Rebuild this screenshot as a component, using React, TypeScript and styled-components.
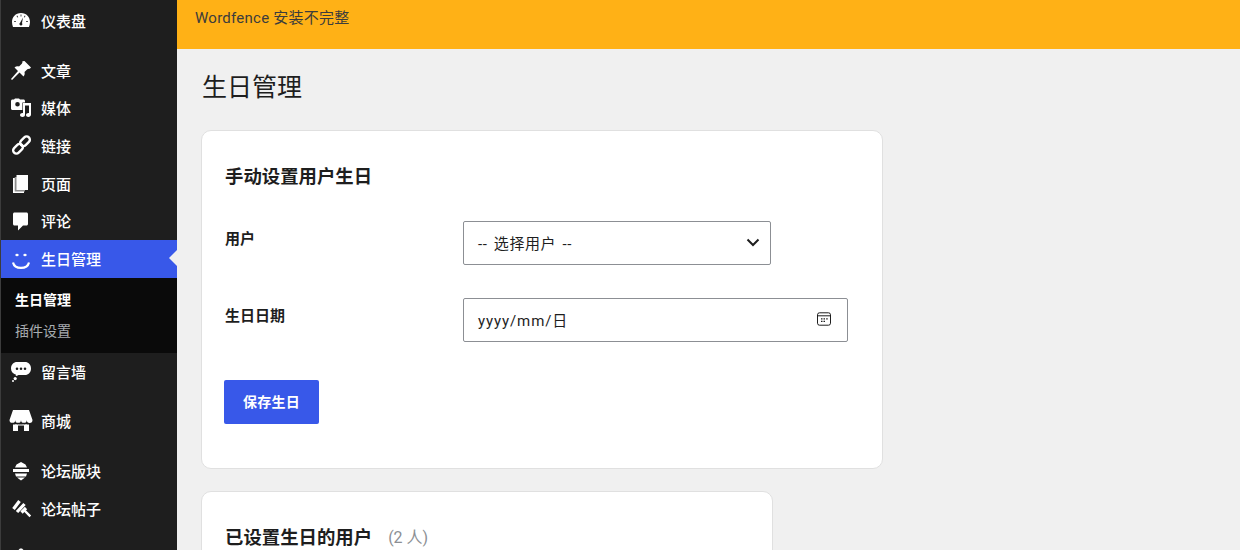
import styled, { createGlobalStyle } from 'styled-components';
import { ReactNode } from 'react';

const GlobalStyle = createGlobalStyle`
  html, body {
    margin: 0;
    height: 550px;
    overflow: hidden;
    background: #f0f0f0;
    font-family: Roboto, "Noto Sans CJK SC", sans-serif;
  }
  * { box-sizing: border-box; }
`;

const Page = styled.div`
  display: flex;
  width: 1240px;
  height: 550px;
  overflow: hidden;
`;

const Sidebar = styled.nav`
  width: 177px;
  flex: none;
  height: 550px;
  overflow: hidden;
  background: #1e1e1e;
  border-left: 1px solid #3c3c3c;
  color: #f0f0f1;
`;

const MenuItem = styled.a<{ $height: number; $active?: boolean; $mb?: number }>`
  position: relative;
  display: flex;
  flex: none;
  align-items: center;
  height: ${({ $height }) => $height}px;
  margin-bottom: ${({ $mb }) => $mb ?? 0}px;
  padding: 0 0 2px 9px;
  gap: 9px;
  font-size: 15px;
  font-weight: 500;
  color: #fff;
  background: ${({ $active }) => ($active ? '#3858e9' : 'transparent')};

  ${({ $active }) =>
    $active &&
    `&::after {
      content: '';
      position: absolute;
      right: 0;
      top: 50%;
      margin-top: -9px;
      border: 8px solid transparent;
      border-right-color: #f0f0f0;
      border-left-width: 0;
    }`}
`;

const IconBox = styled.span`
  display: flex;
  width: 22px;
  height: 22px;
  flex: none;
  svg { display: block; fill: currentColor; overflow: visible; }
`;

const SubMenu = styled.div`
  display: flex;
  flex-direction: column;
  height: 75px;
  padding: 5px 0 0 14px;
  background: #0a0a0a;
`;

const SubItem = styled.a<{ $current?: boolean }>`
  display: flex;
  align-items: center;
  height: 31px;
  font-size: 14px;
  font-weight: ${({ $current }) => ($current ? 700 : 400)};
  color: ${({ $current }) => ($current ? '#fff' : 'rgba(240, 246, 252, 0.7)')};
`;

const Main = styled.main`
  flex: 1;
  min-width: 0;
  display: flex;
  flex-direction: column;
`;

const Notice = styled.div`
  flex: none;
  height: 49px;
  padding: 9px 18px 0;
  background: #ffb116;
  color: #3c3c3c;
  font-size: 15px;
  line-height: 18px;
  letter-spacing: 0.25px;
`;

const Content = styled.div`
  flex: none;
  padding: 22px 0 0 24px;
`;

const Title = styled.h1`
  margin: 0 0 25px 1px;
  font-size: 25px;
  font-weight: 400;
  line-height: 34px;
  color: #1e1e1e;
`;

const Card = styled.section<{ $width: number; $height?: number }>`
  width: ${({ $width }) => $width}px;
  ${({ $height }) => $height && `height: ${$height}px;`}
  margin-bottom: 22px;
  padding: 34px 22px 0;
  background: #fff;
  border: 1px solid #e0e0e0;
  border-radius: 10px;
`;

const CardTitle = styled.h2`
  display: flex;
  align-items: center;
  margin: 0 0 32px 1px;
  font-size: 18.4px;
  font-weight: 700;
  line-height: 24px;
  color: #1e1e1e;
`;

const Count = styled.span`
  margin-left: 16px;
  font-size: 16px;
  font-weight: 400;
  color: #8c8f94;
`;

const FormRow = styled.div`
  display: flex;
  margin-bottom: 33px;
`;

const Label = styled.label`
  width: 239px;
  flex: none;
  padding: 8px 0 0 1px;
  font-size: 15px;
  font-weight: 700;
  line-height: 20px;
  color: #1e1e1e;
`;

const Field = styled.div<{ $width: number; $pr: number; $spacing: number }>`
  display: flex;
  align-items: center;
  justify-content: space-between;
  width: ${({ $width }) => $width}px;
  height: 44px;
  padding: 0 ${({ $pr }) => $pr}px 2px 14px;
  background: #fff;
  border: 1px solid #8c8f94;
  border-radius: 2px;
  font-size: 15px;
  letter-spacing: ${({ $spacing }) => $spacing}px;
  word-spacing: 2px;
  color: #1e1e1e;
`;

const SaveButton = styled.button`
  display: block;
  width: 95px;
  height: 44px;
  margin-top: 38px;
  padding: 0 0 3px;
  border: none;
  border-radius: 2px;
  background: #3858e9;
  color: #fff;
  font-family: inherit;
  font-size: 14px;
  font-weight: 700;
  letter-spacing: 0.3px;
`;

// menu glyphs, all drawn on the 22x22 icon box
const Glyph = ({ children }: { children: ReactNode }) => (
  <svg width="22" height="22" viewBox="0 0 22 22">
    {children}
  </svg>
);

const icons: Record<string, ReactNode> = {
  dashboard: (
    <Glyph>
      <path
        fillRule="evenodd"
        d="M11 4C5.500 4 2 8.300 2 13c0 1.800.4 3.500 1 5h16c.6-1.500 1-3.200 1-5 0-4.700-3.500-9-9-9zM10.600 5.500h.8v2h-.8zM6.500 7l.7-.4 1 1.600-.7.4zM15.500 7l-.7-.4-1 1.600.7.4zM4 12.300h2v.8H4zM16 12.300h2v.8h-2zM13 8.500l-1 5.500a1.500 1.500 0 1 1-1.900-.3z"
      />
    </Glyph>
  ),
  pin: (
    <Glyph>
      <path d="M14.500 2 21 8.500 19.800 9.700c-.8-.2-1.800 0-2.500.6L14.500 13c.5 1.800.1 3.400-1 4.500l-4-4L2 21l-1-1 7-8-3.500-3.500c1.300-1.200 3-1.500 4.500-1l2.800-2.800c.6-.7.8-1.600.6-2.400z" />
    </Glyph>
  ),
  media: (
    <Glyph>
      <path
        fillRule="evenodd"
        d="M4 3.500 5 2.500h4l1 1h3.500c.8 0 1.500.7 1.500 1.500v7.500c0 .8-.7 1.500-1.500 1.500h-11C1.700 14 1 13.300 1 12.500V5c0-.8.7-1.500 1.500-1.500zM7.500 6a2.300 2.300 0 1 0 0 4.600 2.300 2.300 0 0 0 0-4.600z"
      />
      <path
        stroke="#1e1e1e"
        strokeWidth="1.200"
        paintOrder="stroke"
        d="M21 7v11.500c0 1.400-1.100 2.500-2.500 2.500s-2.500-.9-2.500-2 1.100-2 2.500-2l.5.100V9.500h-4v9.200c0 1.300-1.100 2.300-2.500 2.300S10 20.100 10 19s1.100-2 2.500-2l.5.100V7z"
      />
    </Glyph>
  ),
  link: (
    <Glyph>
      <g fill="none" stroke="currentColor" strokeWidth="2.400">
        <rect x="9.500" y="4" width="11" height="6.500" rx="3.200" transform="rotate(-45 15 7.250)" />
        <rect x="2.500" y="11.500" width="11" height="6.500" rx="3.200" transform="rotate(-45 8 14.750)" />
      </g>
    </Glyph>
  ),
  pages: (
    <Glyph>
      <path d="M3 6h11v15H3z" />
      <path fill="#8d8d8d" d="M4.700 5H15v14.500H4.700z" />
      <path d="M6.500 3H18v15H6.500z" />
    </Glyph>
  ),
  comment: (
    <Glyph>
      <path d="M4.500 2.500h12c.8 0 1.500.7 1.500 1.500v10c0 .8-.7 1.500-1.500 1.500H13l-5 5v-5H4.500c-.8 0-1.500-.7-1.500-1.500V4c0-.8.7-1.500 1.500-1.500z" />
    </Glyph>
  ),
  smile: (
    <Glyph>
      <ellipse cx="7" cy="8" rx="1.700" ry="1.300" />
      <ellipse cx="15" cy="8" rx="1.700" ry="1.300" />
      <path fill="none" stroke="currentColor" strokeWidth="2.200" d="M3 15.500c1.800 7.300 14.200 7.300 16 0" />
    </Glyph>
  ),
  bubble: (
    <Glyph>
      <path
        fillRule="evenodd"
        d="M7 2h8c3.300 0 6 2.400 6 6.500S18.300 15 15 15H8.500c-.8.6-2 1-3 1 .3-.4.500-.8.500-1.300C3 14 1 11.500 1 8.500 1 4.400 3.700 2 7 2zM7 7.500a1.300 1.300 0 1 0 0 2.600 1.300 1.300 0 0 0 0-2.600zM11 7.500a1.300 1.300 0 1 0 0 2.600 1.300 1.300 0 0 0 0-2.600zM15 7.500a1.300 1.300 0 1 0 0 2.600 1.300 1.300 0 0 0 0-2.600z"
      />
      <circle cx="5.200" cy="18.600" r="1.600" />
      <circle cx="3" cy="21" r="1" />
    </Glyph>
  ),
  store: (
    <Glyph>
      <path d="M3 1h16l3.500 10a2.870 2.870 0 0 1-5.750 0 2.870 2.870 0 0 1-5.750 0 2.870 2.870 0 0 1-5.750 0 2.870 2.870 0 0 1-5.750 0z" />
      <path d="M3 15.500c1.200.2 2.300 0 3-.5.6.5 2 .8 2.800.3.600.4 3.600.4 4.400 0 .8.500 2.200.2 2.800-.3.700.5 1.800.7 3 .5V22h-5v-5.500H8V22H3z" />
    </Glyph>
  ),
  forum: (
    <Glyph>
      <path d="M11 3l4.500 2.500L17 8.500H5l1.500-3zM3 10h16v3H3zM5 14.500h12l-1 3H6zM7 18.500h8L11 21.500z" />
    </Glyph>
  ),
  post: (
    <Glyph>
      <g fill="none" stroke="currentColor">
        <path strokeWidth="3.200" d="M3.500 12l6-8M7 15l7.500-8" />
        <path strokeWidth="3.200" d="M11.500 15.500 16 11" />
        <path strokeWidth="2.400" d="M13.500 12.500 20.300 19.300" />
      </g>
    </Glyph>
  ),
  more: (
    <Glyph>
      <path d="M10 4.500h2l8 8H2z" />
    </Glyph>
  ),
};

const CalendarIcon = () => (
  <svg width="14" height="14" viewBox="0 0 14 14" fill="none" stroke="#1e1e1e">
    <rect x="0.500" y="0.800" width="13" height="12.400" rx="2" />
    <path d="M0.500 3.800h13" />
    <path d="M4 6.800h1.500M6.500 6.800h1.500M9.200 6.800h1.500M4 9.300h1.500M6.500 9.300h1.500" strokeWidth="1.200" />
  </svg>
);

const Chevron = () => (
  <svg width="14" height="9" viewBox="0 0 14 9" fill="none" stroke="#1e1e1e" strokeWidth="2">
    <path d="M1.500 1.500 7 7l5.500-5.500" />
  </svg>
);

const App = () => (
  <Page>
    <GlobalStyle />
    <Sidebar>
      <MenuItem $height={42} $mb={12}>
        <IconBox>{icons.dashboard}</IconBox>仪表盘
      </MenuItem>
      <MenuItem $height={34} $mb={1}>
        <IconBox>{icons.pin}</IconBox>文章
      </MenuItem>
      <MenuItem $height={38}>
        <IconBox>{icons.media}</IconBox>媒体
      </MenuItem>
      <MenuItem $height={38}>
        <IconBox>{icons.link}</IconBox>链接
      </MenuItem>
      <MenuItem $height={38}>
        <IconBox>{icons.pages}</IconBox>页面
      </MenuItem>
      <MenuItem $height={37}>
        <IconBox>{icons.comment}</IconBox>评论
      </MenuItem>
      <MenuItem $height={38} $active>
        <IconBox>{icons.smile}</IconBox>生日管理
      </MenuItem>
      <SubMenu>
        <SubItem $current>生日管理</SubItem>
        <SubItem>插件设置</SubItem>
      </SubMenu>
      <MenuItem $height={38} $mb={11}>
        <IconBox>{icons.bubble}</IconBox>留言墙
      </MenuItem>
      <MenuItem $height={38} $mb={12}>
        <IconBox>{icons.store}</IconBox>商城
      </MenuItem>
      <MenuItem $height={38}>
        <IconBox>{icons.forum}</IconBox>论坛版块
      </MenuItem>
      <MenuItem $height={38} $mb={9}>
        <IconBox>{icons.post}</IconBox>论坛帖子
      </MenuItem>
      <MenuItem $height={38}>
        <IconBox>{icons.more}</IconBox>
      </MenuItem>
    </Sidebar>
    <Main>
      <Notice>Wordfence 安装不完整</Notice>
      <Content>
        <Title>生日管理</Title>
        <Card $width={682} $height={339}>
          <CardTitle>手动设置用户生日</CardTitle>
          <FormRow>
            <Label>用户</Label>
            <Field $width={308} $pr={10} $spacing={0.6}>
              -- 选择用户 --
              <Chevron />
            </Field>
          </FormRow>
          <FormRow>
            <Label>生日日期</Label>
            <Field $width={385} $pr={16} $spacing={0.9}>
              yyyy/mm/日
              <CalendarIcon />
            </Field>
          </FormRow>
          <SaveButton>保存生日</SaveButton>
        </Card>
        <Card $width={572}>
          <CardTitle>
            已设置生日的用户
            <Count>(2 人)</Count>
          </CardTitle>
        </Card>
      </Content>
    </Main>
  </Page>
);

export default App;
